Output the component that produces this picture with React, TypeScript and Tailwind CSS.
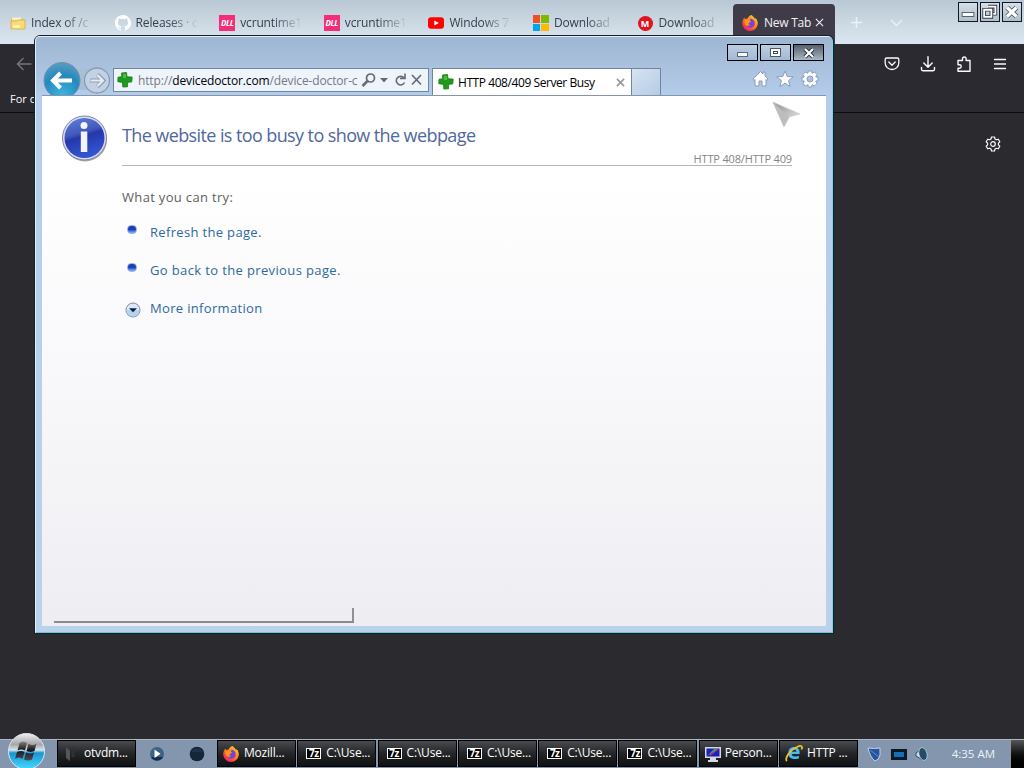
import clsx from "clsx";
import type { ReactNode } from "react";

function FirefoxIcon({ className }: { className?: string }) {
    return (
        <svg viewBox="0 0 16 16" className={className}>
            <defs>
                <linearGradient id="fox" x1="1" y1="0" x2="0.2" y2="1">
                    <stop offset="0" stopColor="#ffe226" />
                    <stop offset="0.45" stopColor="#ff8a16" />
                    <stop offset="1" stopColor="#f5156c" />
                </linearGradient>
            </defs>
            <path d="M9.500 0c1 1.200 2.800 2 3.600 4l.6-1c1.500 2 2.300 4 2.100 6A7.900 7.900 0 0 1 8 16 7.800 7.800 0 0 1 .2 8.300C.2 6 1 4 2.400 2.400L3 4.100l2.600-.6C6 2 7.500.6 9.500 0z" fill="url(#fox)" />
            <path d="M8.600 3.700c1.800 0 4.100 1.700 4.100 4.400a4.500 4.500 0 0 1-8.900 1L3.500 6.400l4 .2z" fill="#7b3fe0" />
            <path d="M2.400 5.300 5.600 4l1.600 1.700 2 .3-2 1.900c-1.600.7-.7 2.200 1.200 1.900-1.700 2.100-5.400 1-5.800-1.900z" fill="#ff980e" />
        </svg>
    );
}

function FolderIcon() {
    return (
        <svg viewBox="0 0 16 16" className="w-4 h-4">
            <path d="M1 3h5l1.500 1.500H14V14H1z" fill="#e7bd43" />
            <path d="M2 2.500h9v3H2z" fill="#f7efcb" />
            <path d="M1 6h6l1-1h7v9H1z" fill="#f9dc74" stroke="#d4a638" strokeWidth=".7" />
            <path d="M3 10h7v3H3z" fill="#fdf1b5" />
        </svg>
    );
}

function GithubIcon() {
    return (
        <svg viewBox="0 0 16 16" className="w-4 h-4" fill="#fff">
            <path d="M8 0C3.580 0 0 3.580 0 8c0 3.540 2.290 6.530 5.470 7.590.4.070.55-.17.55-.38v-1.340c-2.230.48-2.700-1.070-2.700-1.070-.36-.93-.89-1.170-.89-1.170-.73-.5.050-.49.050-.49.8.060 1.230.83 1.230.83.71 1.230 1.870.87 2.330.66.070-.52.280-.87.510-1.070C4.770 11.360 2.900 10.670 2.900 7.600c0-.87.310-1.590.82-2.150-.08-.2-.36-1.020.08-2.120 0 0 .67-.21 2.200.82a7.700 7.700 0 0 1 4 0c1.530-1.040 2.200-.82 2.200-.82.44 1.100.16 1.920.08 2.120.51.560.82 1.270.82 2.150 0 3.070-1.870 3.750-3.650 3.950.29.250.54.730.54 1.480v2.200c0 .21.15.46.55.38A8 8 0 0 0 8 0z" />
        </svg>
    );
}

function DllIcon() {
    return (
        <span className="w-4 h-4 bg-[#f52c78] text-white text-[8px] leading-4 font-bold italic text-center tracking-tighter">DLL</span>
    );
}

function YoutubeIcon() {
    return (
        <svg viewBox="0 0 16 16" className="w-4 h-4">
            <rect y="2.300" width="16" height="11.500" rx="3.200" fill="#f00" />
            <path d="M6.300 5.500v5L10.800 8z" fill="#fff" />
        </svg>
    );
}

function MicrosoftIcon() {
    return (
        <span className="w-4 h-4 grid grid-cols-2 gap-px">
            <span className="bg-[#f25022]" />
            <span className="bg-[#7fba00]" />
            <span className="bg-[#00a4ef]" />
            <span className="bg-[#ffb900]" />
        </span>
    );
}

function MegaIcon() {
    return (
        <span className="w-[15px] h-[15px] mr-px rounded-full bg-[#e0131f] text-white text-[9px] leading-[15px] font-bold text-center">M</span>
    );
}

function PlusLogo() {
    return (
        <svg viewBox="0 0 16 16" className="w-4 h-4 shrink-0">
            <path d="M4.500 1l5-.5.5 4.300 5.200.3-.5 4.900-4 .2-.2 4.600-4.700.2-.3-4.600L.8 9.700 1 5.200l3.800-.4z" fill="#1f9a1c" stroke="#137a14" strokeWidth=".8" />
            <path d="M6 2h3v4H6z" fill="#4bbd3c" />
        </svg>
    );
}

const browserTabs = [
    { title: "Index of /c", icon: <FolderIcon /> },
    { title: "Releases · c", icon: <GithubIcon /> },
    { title: "vcruntime1", icon: <DllIcon /> },
    { title: "vcruntime1", icon: <DllIcon /> },
    { title: "Windows 7", icon: <YoutubeIcon /> },
    { title: "Download", icon: <MicrosoftIcon /> },
    { title: "Download", icon: <MegaIcon /> },
];

function FirefoxTabs() {
    return (
        <div className="h-11 flex items-start bg-linear-to-b from-[#b9c8d5] via-[#cbd8e2] to-[#dbe6f0] text-[12px] text-[#33414f]">
            <div className="flex pl-[10px] pt-[5px] w-[733px]">
                {browserTabs.map((tab, i) => (
                    <div key={i} className="w-[104.600px] h-9 flex items-center gap-[5px] shrink-0">
                        {tab.icon}
                        <span className="w-[66px] whitespace-nowrap tracking-[-0.15px] mask-r-from-50% mask-r-to-95%">{tab.title}</span>
                    </div>
                ))}
            </div>
            <div className="mt-1 w-[102px] h-10 flex items-center pb-[2px] pl-[9px] rounded-t bg-[#403b49] text-[#f2f2f5]">
                <FirefoxIcon className="w-4 h-4" />
                <span className="ml-[6px] w-[49px] whitespace-nowrap tracking-[-0.25px]">New Tab</span>
                <svg viewBox="0 0 10 10" className="w-[9px] h-[9px] ml-[2px] mb-[2px]" stroke="#f2f2f5" strokeWidth="1.200">
                    <path d="M1 1l8 8M9 1L1 9" />
                </svg>
            </div>
            <svg viewBox="0 0 60 12" className="w-[60px] h-3 mt-4 ml-4" fill="none" stroke="#eaf1f7" strokeWidth="1.500">
                <path d="M0 6.500h11M5.500 1v11M40 4l5.500 5.500L51 4" />
            </svg>
            <div className="ml-auto pt-[2px] pr-[2px] flex gap-[2px]">
                <CaptionButton>
                    <rect x="3.500" y="10.500" width="13" height="4.500" fill="#fff" stroke="#4b5665" />
                </CaptionButton>
                <CaptionButton>
                    <path d="M8 4h8v8h-2.500M3.500 7.500h8v8h-8z" fill="none" stroke="#303846" strokeWidth="4" />
                    <path d="M8 4h8v8h-2.500M3.500 7.500h8v8h-8z" fill="none" stroke="#fff" strokeWidth="2" />
                </CaptionButton>
                <CaptionButton>
                    <path d="M4.500 5l10.500 10M15 5L4.500 15" stroke="#4b5665" strokeWidth="5.500" />
                    <path d="M4.500 5l10.500 10M15 5L4.500 15" stroke="#fff" strokeWidth="3.500" />
                </CaptionButton>
            </div>
        </div>
    );
}

function CaptionButton({ children }: { children: ReactNode }) {
    return (
        <div className="w-5 h-5 border-[1.500px] border-[#101923] bg-linear-to-b from-[#d4dfe8] to-[#b1bdc8]">
            <svg viewBox="0 0 20 20" className="w-full h-full">{children}</svg>
        </div>
    );
}

function FirefoxWindow() {
    return (
        <div className="flex-1 flex flex-col">
            <FirefoxTabs />
            <div className="h-[69px] flex flex-col bg-[#2b2a30] border-b border-[#0d0d10] text-[#fbfbfe]">
                <div className="h-10 flex items-center justify-between pl-4 pr-4">
                    <svg viewBox="0 0 16 16" className="w-4 h-4" fill="none" stroke="#77767c" strokeWidth="1.400">
                        <path d="M15.500 8H1.500M7.500 2l-6 6 6 6" />
                    </svg>
                    <div className="flex items-center gap-5">
                        <svg viewBox="0 0 16 16" className="w-4 h-4" fill="none" stroke="#fbfbfe" strokeWidth="1.300" strokeLinecap="round" strokeLinejoin="round">
                            <path d="M2.500 2h11q1.300 0 1.300 1.300V7a6.800 6.500 0 0 1-13.600 0V3.300Q1.200 2 2.500 2zM4.800 6L8 9.200 11.200 6" />
                        </svg>
                        <svg viewBox="0 0 16 16" className="w-4 h-4" fill="none" stroke="#fbfbfe" strokeWidth="1.400" strokeLinecap="round" strokeLinejoin="round">
                            <path d="M8 .8v10M3.800 7L8 11.200 12.200 7M1.500 11.500v1.800q0 1.400 1.400 1.400h10.200q1.400 0 1.400-1.400v-1.800" />
                        </svg>
                        <svg viewBox="0 0 16 16" className="w-4 h-4" fill="none" stroke="#fbfbfe" strokeWidth="1.400" strokeLinejoin="round">
                            <path d="M6.500 4.500V2.800a1.800 1.800 0 0 1 3.600 0v1.700H14v10.700H2v-3h1.500a1.700 1.700 0 0 0 0-3.500H2V4.500z" />
                        </svg>
                        <svg viewBox="0 0 16 16" className="w-4 h-4" stroke="#fbfbfe" strokeWidth="1.300" strokeLinecap="round">
                            <path d="M2.500 3.500h11M2.500 8h11M2.500 12.500h11" />
                        </svg>
                    </div>
                </div>
                <div className="h-7 pl-[10px] pt-[7px] text-[11px] leading-4">For quick access, place your bookmarks here</div>
            </div>
            <div className="flex-1 bg-[#2b2a2f] flex justify-end items-start pt-[23px] pr-[23px]">
                <svg viewBox="0 0 16 16" className="w-4 h-4" fill="none" stroke="#fbfbfe" strokeWidth="1.200" strokeLinejoin="round">
                    <path d="M6.500 1h3l.5 2 1.300.8 2-.6 1.500 2.600L13.400 7.200v1.600l1.400 1.400-1.500 2.600-2-.6L10 13l-.5 2h-3L6 13l-1.300-.8-2 .6-1.500-2.600 1.400-1.400V7.200L1.200 5.800l1.500-2.600 2 .6L6 3z" />
                    <circle cx="8" cy="8" r="2.300" />
                </svg>
            </div>
        </div>
    );
}

function NavigationBar() {
    return (
        <div className="flex h-[33px] items-end">
            <svg viewBox="0 0 71 34" className="w-[71px] h-[34px] shrink-0 -mb-px">
                <defs>
                    <radialGradient id="back" cx=".5" cy=".9" r=".9">
                        <stop offset="0" stopColor="#3db5df" />
                        <stop offset=".6" stopColor="#2489bd" />
                        <stop offset="1" stopColor="#5a9dc4" />
                    </radialGradient>
                </defs>
                <path d="M34 6h16v22H34z" fill="#a9bfd8" />
                <circle cx="20" cy="18.500" r="18" fill="url(#back)" stroke="#718fab" />
                <path d="M30 18.500H12M18.500 11L11 18.500l7.500 7.500" fill="none" stroke="#fff" strokeWidth="4" />
                <circle cx="55" cy="18.500" r="12.500" fill="#c2d2e4" stroke="#8b9bb0" strokeWidth="1.300" />
                <path d="M48 18.500h12M55.500 12.500l6 6-6 6" fill="none" stroke="#8d9cb1" strokeWidth="4" />
                <path d="M48.500 18.500h12M55.500 13l5.500 5.500-5.500 5.500" fill="none" stroke="#e6edf6" strokeWidth="2.200" />
            </svg>
            <div className="w-[316px] h-6 mb-[3px] flex items-center border border-[#71859e] bg-[#eef4fb] pl-[3px] shrink-0">
                <PlusLogo />
                <div className="ml-[5px] pt-px w-[220px] whitespace-nowrap text-[12px] text-[#77797f] tracking-[-0.14px]">
                    http://<span className="text-black">devicedoctor.com</span>/device-doctor-c
                </div>
                <svg viewBox="0 0 64 18" className="w-16 h-[18px] ml-[3px]" fill="none" stroke="#666a72" strokeWidth="1.700">
                    <circle cx="9.500" cy="7" r="4" />
                    <path d="M6.500 10L1.500 15" strokeWidth="2.500" />
                    <path d="M19 7h8l-4 4.500z" fill="#666a72" stroke="none" />
                    <path d="M43 7A4.300 4.300 0 1 0 43.500 11.500M39 7.500h5V2.500" strokeWidth="1.600" />
                    <path d="M51 4l9 9.500M60 4l-9 9.500" />
                </svg>
            </div>
            <div className="ml-[3px] w-[200px] h-[27px] flex items-center border border-b-0 border-[#71859e] bg-white pl-[5px] shrink-0 text-[12px] text-black">
                <PlusLogo />
                <span className="ml-[4px] w-[150px] pt-[2px] whitespace-nowrap tracking-[-0.430px]">HTTP 408/409 Server Busy</span>
                <svg viewBox="0 0 10 10" className="w-[9px] h-[9px] ml-[8px]" stroke="#96969b" strokeWidth="1.700">
                    <path d="M1 1l8 8M9 1L1 9" />
                </svg>
            </div>
            <div className="w-[29px] h-[27px] border border-b-0 border-l-0 border-[#71859e] bg-linear-to-br from-[#d6e4f4] to-[#b5cbe3]" />
            <svg viewBox="0 0 68 18" className="w-[68px] h-[18px] ml-auto mr-[6px] mb-[7px]" fill="#fff" stroke="#8a9cb7" strokeWidth="1" strokeLinejoin="round">
                <path d="M1 9L8.500 1.500 11 4V2h2v4l3 3-1 1.500-1-1V16h-4v-5H7v5H3V9.500l-1 1z" />
                <path d="M33 1l2.200 5.500 6 .4-4.600 3.700 1.500 5.900L33 13.200l-5.100 3.300 1.500-5.900-4.600-3.700 6-.4z" />
                <g transform="translate(58 9)">
                    <path d="M-1.700-8h3.400l.4 2.300L4.500-7 7-4.500 5.700-2.100l2.300.4v3.400l-2.300.4L7 4.500 4.500 7 2.100 5.700 1.700 8h-3.400l-.4-2.300L-4.500 7-7 4.500l1.300-2.400L-8 1.700v-3.400l2.300-.4L-7-4.500-4.500-7l2.400 1.300z" />
                    <circle r="3" fill="#abc3df" />
                </g>
            </svg>
        </div>
    );
}

function WindowButtons() {
    return (
        <div className="flex justify-end gap-[2px] pt-[7px] pr-[2px]">
            <div className="w-[31px] h-[17px] border-[1.500px] border-black bg-linear-to-b from-[#bccde2] to-[#a2b9d4] flex justify-center items-center">
                <span className="w-[11px] h-[5px] mt-1 bg-white border border-[#5c6878]" />
            </div>
            <div className="w-[31px] h-[17px] border-[1.500px] border-black bg-linear-to-b from-[#bccde2] to-[#a2b9d4] flex justify-center items-center">
                <span className="w-[11px] h-[9px] bg-white border border-[#4c5868] flex justify-center items-center">
                    <span className="w-[5px] h-[3px] border border-[#3c4858]" />
                </span>
            </div>
            <div className="w-[31px] h-[17px] border-[1.500px] border-black bg-linear-to-b from-[#55606d] to-[#aab7c5] flex justify-center items-center">
                <svg viewBox="0 0 12 10" className="w-3 h-[10px]">
                    <path d="M2 1l8 8M10 1L2 9" stroke="#27303b" strokeWidth="4" />
                    <path d="M2 1l8 8M10 1L2 9" stroke="#fff" strokeWidth="2.200" />
                </svg>
            </div>
        </div>
    );
}

function InfoIcon() {
    return (
        <svg viewBox="0 0 48 50" className="w-12 h-[50px] shrink-0 -ml-px mr-px">
            <defs>
                <linearGradient id="info" x1="0" y1="0" x2=".3" y2="1">
                    <stop offset="0" stopColor="#6384dc" />
                    <stop offset=".45" stopColor="#4058ba" />
                    <stop offset=".55" stopColor="#2438ac" />
                    <stop offset="1" stopColor="#3354d0" />
                </linearGradient>
            </defs>
            <ellipse cx="24" cy="25.500" rx="22" ry="22" fill="#a9a9ae" />
            <circle cx="23.500" cy="24" r="22" fill="#d9dcec" stroke="#7b83a7" />
            <circle cx="23.500" cy="24" r="20" fill="url(#info)" />
            <circle cx="23" cy="11.500" r="3.500" fill="#f4f5fb" />
            <path d="M19.800 17.500h6.500V38h-6.500z" fill="#f4f5fb" />
        </svg>
    );
}

function Bullet() {
    return <span className="w-[10px] h-[9px] ml-[5px] mr-[13px] mb-[7px] rounded-[4px] border border-[#9db4e6] bg-linear-to-b from-[#1b3aa8] via-[#1c42c4] to-[#7fb4f3]" />;
}

function ErrorPage() {
    return (
        <div className="flex-1 bg-linear-to-b from-white from-15% via-[#f7f7fa] via-60% to-[#eeeef2] pl-5 pr-[34px] pt-[18px] text-[#606060] border-t border-[#8495ad] flex flex-col">
            <div className="flex">
                <InfoIcon />
                <div className="flex-1 ml-3">
                    <div className="h-[52px] border-b border-[#b3b3ba] pt-[9px]">
                        <h1 className="text-[18px] leading-6 tracking-[-0.600px] text-[#50689f] whitespace-nowrap">The website is too busy to show the webpage</h1>
                        <p className="mt-[4px] text-right text-[11px] leading-4 text-[#858585] tracking-[-0.160px]">HTTP 408/HTTP 409</p>
                    </div>
                    <p className="mt-[21px] text-[13px] leading-5 tracking-[0.33px]">What you can try:</p>
                    <ul className="mt-[7px] text-[13px] tracking-[0.33px] text-[#2c6a9f]">
                        <li className="h-[38px] flex items-center"><Bullet />Refresh the page.</li>
                        <li className="h-[38px] flex items-center tracking-[0.37px]"><Bullet />Go back to the previous page.</li>
                        <li className="h-[38px] flex items-center">
                            <svg viewBox="0 0 16 16" className="w-4 h-4 ml-[3px] mr-[9px] mt-[2px]">
                                <circle cx="8" cy="8" r="7" fill="#dbe8f6" stroke="#7c8ca8" />
                                <path d="M1.500 8a6.500 6.500 0 0 0 13 0z" fill="#b3d3ee" />
                                <path d="M4 6.300h8L8 10.300z" fill="#101c50" />
                            </svg>
                            More information
                        </li>
                    </ul>
                </div>
            </div>
            <div className="mt-auto mb-[3px] -ml-2 w-[300px] h-[15px] border-b-2 border-[#8a8a90] flex justify-end">
                <span className="w-[2px] h-[13px] bg-[#909096]" />
            </div>
        </div>
    );
}

// Floats over the Firefox window
function ExplorerWindow() {
    return (
        <div className="absolute left-[34px] top-[35px] w-[800px] h-[599px] rounded-t-md border border-[#17212b] overflow-hidden">
            <div className="w-full h-full rounded-t-[5px] border border-[#dff1fb] border-b-[#65c8d4] border-r-[#79d2e6] bg-linear-to-b from-[#9fb6d2] via-[#b4cdea] via-10% to-[#bad2ec] flex flex-col px-[6px] pb-[6px]">
                <div className="h-[58px] flex flex-col justify-between">
                    <WindowButtons />
                    <NavigationBar />
                </div>
                <ErrorPage />
            </div>
        </div>
    );
}

function SevenZipIcon() {
    return <span className="w-[15px] h-[11px] shrink-0 border border-white bg-black text-white text-[10px] leading-[9px] font-bold text-center tracking-tighter">7z</span>;
}

function ExplorerIcon() {
    return (
        <span className="w-[18px] h-[25px] shrink-0 grid">
            <span className="col-start-1 row-start-1 text-center text-[22px] leading-[19px] font-bold text-[#48bdf2]">e</span>
            <svg viewBox="0 0 18 18" className="col-start-1 row-start-1 w-[18px] h-[18px] mt-1">
                <path d="M2 16C-1 14 5 5 12 2c4-2 6-1 4.500 2.500" fill="none" stroke="#f2bf28" strokeWidth="1.800" />
            </svg>
        </span>
    );
}

function MonitorIcon() {
    return (
        <svg viewBox="0 0 16 16" className="w-4 h-4 shrink-0">
            <path d="M0 1h16v11H0zM5 12h6v2h2v2H3v-2h2z" fill="#d5d8dc" />
            <path d="M1.500 2.500h13v8h-13z" fill="#191fc0" />
            <path d="M2 10l7-7h4z" fill="#18b667" />
            <path d="M5 9l8-6" stroke="#e9304b" strokeWidth="1.300" />
        </svg>
    );
}

function TaskButton({ icon, label, wide }: { icon: ReactNode; label: string; wide?: boolean }) {
    return (
        <div className={clsx("w-[79px] h-[27px] shrink-0 flex items-center border border-black bg-linear-to-b from-[#4a4b4f] via-[#242527] via-50% to-[#101112] text-white text-[12px] whitespace-nowrap", wide ? "gap-[4px] pl-[5px]" : "gap-[5px] pl-[8px]")}>
            {icon}
            <span className="tracking-[-0.2px] pb-[2px]">{label}</span>
        </div>
    );
}

function StartOrb() {
    return (
        <svg viewBox="0 0 40 36" className="w-10 h-9 ml-[7px] -mt-[7px] mr-[10px] shrink-0">
            <defs>
                <linearGradient id="orb" x1="0" y1="0" x2="0" y2="1">
                    <stop offset="0" stopColor="#f1f1f3" />
                    <stop offset=".3" stopColor="#a5a5aa" />
                    <stop offset=".46" stopColor="#d8e5ee" />
                    <stop offset=".54" stopColor="#1c93d0" />
                    <stop offset="1" stopColor="#45dcff" />
                </linearGradient>
                <linearGradient id="flag" x1="0" y1="0" x2="0" y2="1">
                    <stop offset="0" stopColor="#8d7f79" />
                    <stop offset=".45" stopColor="#10181f" />
                    <stop offset="1" stopColor="#4c5055" />
                </linearGradient>
            </defs>
            <circle cx="19.500" cy="18.500" r="18" fill="url(#orb)" stroke="#dce6ed" />
            <path d="M12.500 10q4-3 7.500 0l-2 7.500q-4-2-7.500 0zM21.500 10.500q4 3 8 0l-2 7.500q-4 2-8 0zM10 19q4-2 7.500 0l-2 7q-4-3-7.500 0zM19 19.500q4 2 8 0l-2 7q-4 2-8 0z" fill="url(#flag)" />
        </svg>
    );
}

function Taskbar() {
    return (
        <div className="h-[29px] flex border-t border-[#aeb8c4] bg-[#8396ae]">
            <StartOrb />
            <TaskButton
                label="otvdm..."
                wide
                icon={
                    <svg viewBox="0 0 16 16" className="w-4 h-4 shrink-0 mr-px">
                        <path d="M3 1l4 4v10l-4-3z" fill="#54565a" />
                        <path d="M10 5v6" stroke="#303235" strokeWidth="3" />
                    </svg>
                }
            />
            <div className="w-[81px] flex items-center justify-center gap-6">
                <svg viewBox="0 0 16 16" className="w-4 h-4">
                    <circle cx="8" cy="8" r="7" fill="#3c6187" />
                    <path d="M2 11a7 7 0 0 0 12 0z" fill="#182c46" />
                    <path d="M5.500 3.500v8.500l6-4.200z" fill="#fff" />
                </svg>
                <svg viewBox="0 0 16 16" className="w-4 h-4">
                    <circle cx="8" cy="8" r="7.300" fill="#142638" />
                    <path d="M2 6a7 7 0 0 1 12 0z" fill="#1d3349" />
                </svg>
            </div>
            <div className="flex gap-[1.300px]">
                <TaskButton wide label="Mozill..." icon={<FirefoxIcon className="w-4 h-4 shrink-0 mr-[1px]" />} />
                <TaskButton label="C:\Use..." icon={<SevenZipIcon />} />
                <TaskButton label="C:\Use..." icon={<SevenZipIcon />} />
                <TaskButton label="C:\Use..." icon={<SevenZipIcon />} />
                <TaskButton label="C:\Use..." icon={<SevenZipIcon />} />
                <TaskButton label="C:\Use..." icon={<SevenZipIcon />} />
                <TaskButton wide label="Person..." icon={<MonitorIcon />} />
                <TaskButton wide label="HTTP ..." icon={<ExplorerIcon />} />
            </div>
            <div className="flex-1 flex items-center pl-[8px] text-[11.500px] text-[#eef2f7]">
                <svg viewBox="0 0 66 16" className="w-[66px] h-4">
                    <path d="M2 2q7 1 12 0v7q-1 5-5 6Q4 11 2 2z" fill="#2754a1" stroke="#c6d1e1" />
                    <path d="M4 4l9 7" stroke="#6687c2" />
                    <path d="M25 3h16v11H25z" fill="#0b1723" />
                    <path d="M28 6h10v5H28z" fill="#136fba" />
                    <path d="M50 7l7-5v12l-7-4z" fill="#d3e0e8" stroke="#344b5c" />
                    <ellipse cx="57" cy="8" rx="4" ry="6.500" fill="#244b68" stroke="#c5d9e6" strokeWidth=".7" transform="rotate(-15 57 8)" />
                </svg>
                <span className="ml-auto mr-[15px] whitespace-nowrap">4:35 AM</span>
            </div>
            <div className="w-[14px] border-l border-[#8d949d] bg-linear-to-b from-[#55585b] via-[#111213] via-50% to-black" />
        </div>
    );
}

export default function App() {
    return (
        <div className="relative w-[1024px] h-[768px] overflow-hidden flex flex-col font-['Open_Sans','Noto_Sans',sans-serif] bg-[#2b2a2f]">
            <FirefoxWindow />
            <ExplorerWindow />
            <Taskbar />
            {/* mouse pointer */}
            <svg viewBox="0 0 30 28" className="absolute left-[772px] top-[101px] w-[30px] h-7">
                <defs>
                    <linearGradient id="pointer" x1="0" y1="0" x2="1" y2="1">
                        <stop offset="0" stopColor="#8f8f8f" />
                        <stop offset=".6" stopColor="#c9c9c9" />
                        <stop offset="1" stopColor="#e8e8e8" />
                    </linearGradient>
                </defs>
                <path d="M1 1l27 12-11 3-5 10z" fill="url(#pointer)" stroke="#d0d0d0" strokeWidth=".8" />
                <path d="M1 1l16 15-5 10z" fill="#bdbdbd" />
            </svg>
        </div>
    );
}
